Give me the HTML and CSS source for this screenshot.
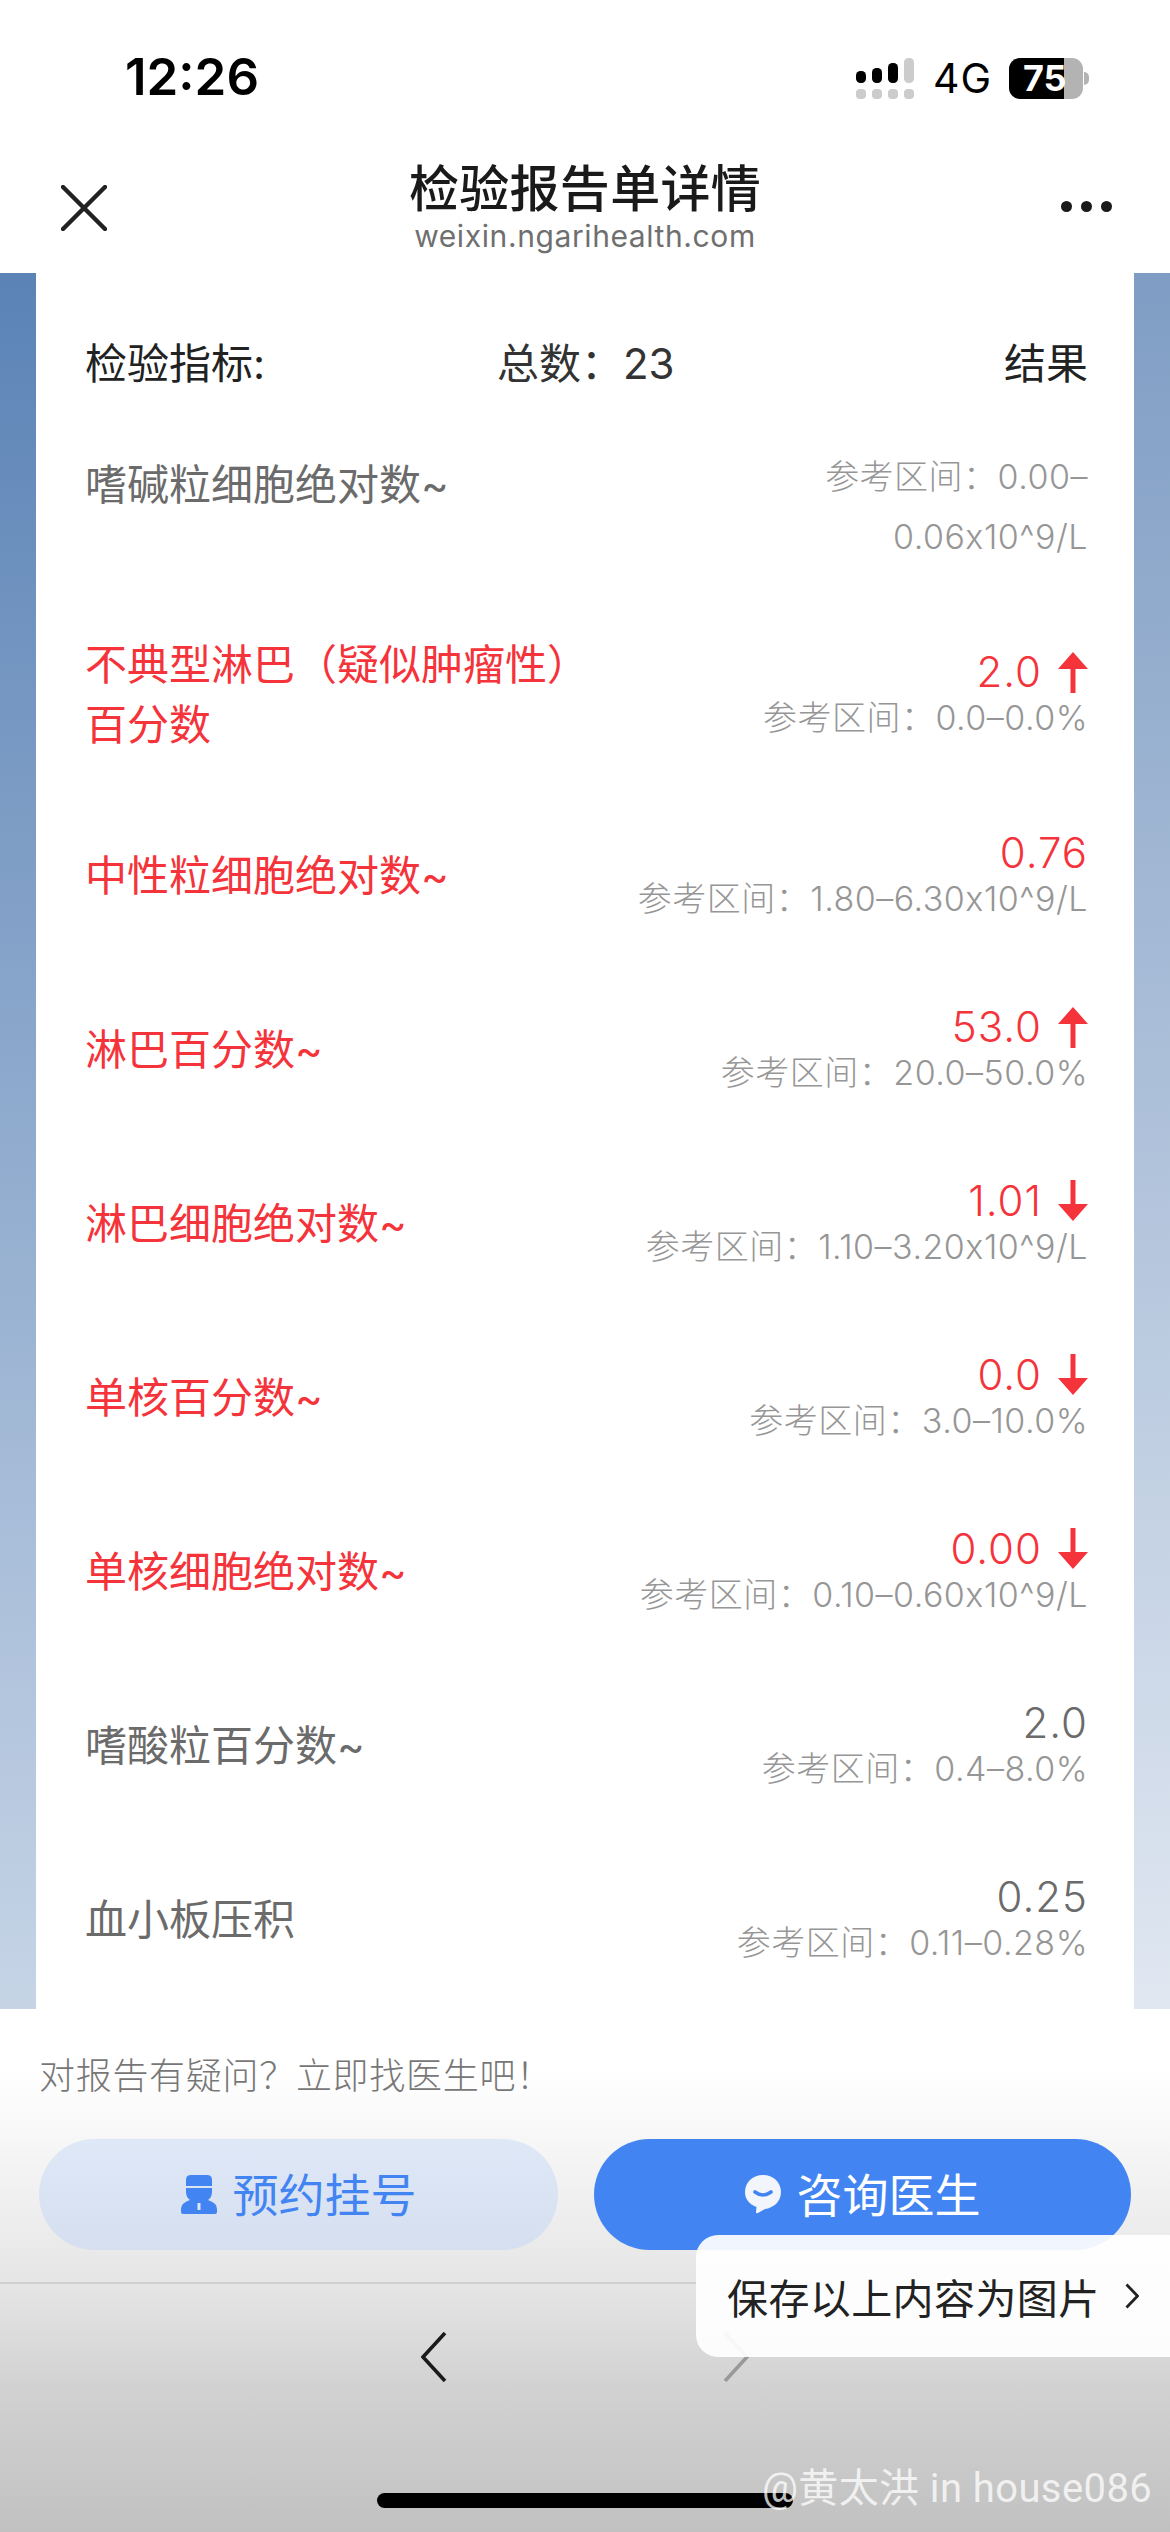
FILE: index.html
```html
<!DOCTYPE html>
<html lang="zh-CN">
<head>
    <meta charset="UTF-8">
    <meta name="viewport" content="width=device-width, initial-scale=1.0">
    <title>检验报告单详情</title>
    <link rel="stylesheet" href="styles.css">
</head>
<body>
    <div class="phone">
        <div class="status-bar">
            <span class="clock">12:26</span>
            <div class="status-icons">
                <svg class="signal" width="58" height="41" viewBox="0 0 58 41">
                    <rect x="0" y="13" width="10" height="12" rx="4.5" fill="#000"/>
                    <rect x="16" y="10" width="10" height="15" rx="4.5" fill="#000"/>
                    <rect x="32" y="5" width="10" height="20" rx="4.5" fill="#000"/>
                    <rect x="48" y="0" width="10" height="25" rx="4.5" fill="#ccc"/>
                    <rect x="0" y="31" width="10" height="10" rx="4" fill="#ccc"/>
                    <rect x="16" y="31" width="10" height="10" rx="4" fill="#ccc"/>
                    <rect x="32" y="31" width="10" height="10" rx="4" fill="#ccc"/>
                    <rect x="48" y="31" width="10" height="10" rx="4" fill="#ccc"/>
                </svg>
                <span class="network">4G</span>
                <div class="battery">
                    <span class="battery-level">75</span>
                    <i class="battery-cap"></i>
                </div>
            </div>
        </div>

        <div class="title-bar">
            <svg class="close-icon" width="46" height="46" viewBox="0 0 46 46">
                <path d="M2 2 L44 44 M44 2 L2 44" stroke="#222" stroke-width="4.4" stroke-linecap="round" fill="none"/>
            </svg>
            <div class="title-text">
                <div class="title">检验报告单详情</div>
                <div class="site">weixin.ngarihealth.com</div>
            </div>
            <div class="more-dots"><i></i><i></i><i></i></div>
        </div>

        <div class="report">
            <div class="card">
                <div class="list-head">
                    <span>检验指标:</span>
                    <span class="total">总数：23</span>
                    <span>结果</span>
                </div>

                <div class="row row-top">
                    <div class="name">嗜碱粒细胞绝对数~</div>
                    <div class="result result-wrap">
                        <div class="range">参考区间：0.00–<br>0.06x10^9/L</div>
                    </div>
                </div>

                <div class="row high">
                    <div class="name">不典型淋巴（疑似肿瘤性）<br>百分数</div>
                    <div class="result">
                        <div class="value">2.0<svg class="arrow" width="30" height="42" viewBox="0 0 30 42"><path d="M15 1 L30 18 H17.5 V42 H12.5 V18 H0 Z" fill="#f5333a"/></svg></div>
                        <div class="range">参考区间：0.0–0.0%</div>
                    </div>
                </div>

                <div class="row high">
                    <div class="name">中性粒细胞绝对数~</div>
                    <div class="result">
                        <div class="value">0.76</div>
                        <div class="range">参考区间：1.80–6.30x10^9/L</div>
                    </div>
                </div>

                <div class="row high">
                    <div class="name">淋巴百分数~</div>
                    <div class="result">
                        <div class="value">53.0<svg class="arrow" width="30" height="42" viewBox="0 0 30 42"><path d="M15 1 L30 18 H17.5 V42 H12.5 V18 H0 Z" fill="#f5333a"/></svg></div>
                        <div class="range">参考区间：20.0–50.0%</div>
                    </div>
                </div>

                <div class="row high">
                    <div class="name">淋巴细胞绝对数~</div>
                    <div class="result">
                        <div class="value">1.01<svg class="arrow" width="30" height="42" viewBox="0 0 30 42"><path d="M15 41 L30 24 H17.5 V0 H12.5 V24 H0 Z" fill="#f5333a"/></svg></div>
                        <div class="range">参考区间：1.10–3.20x10^9/L</div>
                    </div>
                </div>

                <div class="row high">
                    <div class="name">单核百分数~</div>
                    <div class="result">
                        <div class="value">0.0<svg class="arrow" width="30" height="42" viewBox="0 0 30 42"><path d="M15 41 L30 24 H17.5 V0 H12.5 V24 H0 Z" fill="#f5333a"/></svg></div>
                        <div class="range">参考区间：3.0–10.0%</div>
                    </div>
                </div>

                <div class="row high">
                    <div class="name">单核细胞绝对数~</div>
                    <div class="result">
                        <div class="value">0.00<svg class="arrow" width="30" height="42" viewBox="0 0 30 42"><path d="M15 41 L30 24 H17.5 V0 H12.5 V24 H0 Z" fill="#f5333a"/></svg></div>
                        <div class="range">参考区间：0.10–0.60x10^9/L</div>
                    </div>
                </div>

                <div class="row">
                    <div class="name">嗜酸粒百分数~</div>
                    <div class="result">
                        <div class="value">2.0</div>
                        <div class="range">参考区间：0.4–8.0%</div>
                    </div>
                </div>

                <div class="row">
                    <div class="name">血小板压积</div>
                    <div class="result">
                        <div class="value">0.25</div>
                        <div class="range">参考区间：0.11–0.28%</div>
                    </div>
                </div>
            </div>
        </div>

        <div class="footer">
            <div class="ask">对报告有疑问？立即找医生吧！</div>
            <div class="actions">
                <div class="btn btn-book">
                    <svg width="36" height="40" viewBox="0 0 36 40">
                        <path d="M5 5 Q5 0 10 0 H26 Q31 0 31 5 V11 H5 Z" fill="#4285f2"/>
                        <path d="M5 13 H31 V17 Q31 22 27 25 Q36 28 36 34 V37 Q36 39 34 39 H2 Q0 39 0 37 V34 Q0 28 9 25 Q5 22 5 17 Z" fill="#4285f2"/>
                        <rect x="16.5" y="28" width="3" height="7" fill="#dde6f6"/>
                    </svg>
                    <span class="btn-label">预约挂号</span>
                </div>
                <div class="btn btn-consult">
                    <svg width="36" height="40" viewBox="0 0 36 40">
                        <path d="M18 0 C28 0 36 7 36 17 C36 27 28 33 20 34 L13 38 Q11 39 11 37 L11.5 32 C4 29 0 24 0 17 C0 7 8 0 18 0 Z" fill="#f2f5fb"/>
                        <path d="M10 17 Q18 23 26 17" stroke="#4285f2" stroke-width="3.6" fill="none" stroke-linecap="round"/>
                    </svg>
                    <span class="btn-label">咨询医生</span>
                </div>
            </div>
            <div class="toolbar">
                <svg width="26" height="50" viewBox="0 0 26 50"><path d="M24 1 L2 25 L24 49" stroke="#1a1a1a" stroke-width="3.6" fill="none"/></svg>
                <svg width="26" height="50" viewBox="0 0 26 50"><path d="M2 1 L24 25 L2 49" stroke="#999" stroke-width="3.6" fill="none"/></svg>
            </div>
            <div class="home-bar"></div>
        </div>

        <div class="save-popup">保存以上内容为图片
            <svg width="14" height="26" viewBox="0 0 14 26"><path d="M1.5 1.5 L12.5 13 L1.5 24.5" stroke="#222" stroke-width="2.8" fill="none"/></svg>
        </div>
        <div class="watermark">@黄太洪 in house086</div>
    </div>
</body>
</html>
```

FILE: styles.css
```css
* {
    box-sizing: border-box;
}
html, body {
    margin: 0;
    padding: 0;
}
body {
    font-family: Inter, "Noto Sans CJK SC", sans-serif;
    background-color: #ffffff;
}
.phone {
    position: relative;
    width: 1170px;
    height: 2532px;
    overflow: hidden;
    display: flex;
    flex-direction: column;
}

/* status bar */
.status-bar {
    height: 130px;
    padding: 48px 0 0 125px;
    display: flex;
    justify-content: space-between;
    align-items: flex-start;
}
.clock {
    font-size: 51px;
    line-height: 58px;
    font-weight: 600;
    color: #000000;
}
.status-icons {
    display: flex;
    align-items: center;
    padding: 9px 0 0 0;
    margin-right: 87px;
}
.signal {
    margin-right: 19px;
}
.network {
    font-size: 41px;
    line-height: 42px;
    letter-spacing: 1px;
    color: #000000;
    margin-right: 17px;
}
.battery {
    position: relative;
    width: 74px;
    height: 41px;
    border-radius: 11px;
    background: linear-gradient(90deg, #000000 0, #000000 75%, #b3b3b3 75%, #b3b3b3 100%);
}
.battery-level {
    display: block;
    padding-left: 14px;
    font-size: 36px;
    line-height: 41px;
    font-weight: 700;
    color: #ffffff;
}
.battery-cap {
    position: absolute;
    right: -6px;
    top: 14px;
    width: 5px;
    height: 13px;
    border-radius: 0 6px 6px 0;
    background-color: #b3b3b3;
}

/* title */
.title-bar {
    position: relative;
    height: 143px;
    background-color: #ffffff;
}
.close-icon {
    position: absolute;
    left: 61px;
    top: 55px;
}
.title-text {
    padding-top: 29px;
    text-align: center;
}
.title {
    font-size: 50px;
    line-height: 60px;
    letter-spacing: 0.3px;
    font-weight: 500;
    color: #1a1a1a;
}
.site {
    font-size: 30px;
    line-height: 34px;
    color: #6f6f6f;
    letter-spacing: 0.6px;
}
.more-dots {
    position: absolute;
    right: 58px;
    top: 71px;
    display: flex;
    gap: 9px;
}
.more-dots i {
    width: 11px;
    height: 11px;
    border-radius: 50%;
    background-color: #1a1a1a;
}

/* report */
.report {
    height: 1736px;
    padding: 0 36px;
    background:
        linear-gradient(180deg, #5b83b6 0, #c6d4e6 100%) left / 50% 100% no-repeat,
        linear-gradient(180deg, #7f9dc4 0, #e0e7f1 100%) right / 50% 100% no-repeat;
}
.card {
    height: 100%;
    padding: 62px 46px 0 49px;
    background-color: #ffffff;
}
.list-head {
    display: grid;
    grid-template-columns: 412px 1fr auto;
    font-size: 42px;
    line-height: 58px;
    color: #222222;
    margin-bottom: 54px;
}
.total {
    color: #333333;
}
.row {
    display: flex;
    justify-content: space-between;
    align-items: center;
    min-height: 106px;
    margin-bottom: 68px;
    color: #6b6b6b;
}
.row-top {
    align-items: flex-start;
}
.row-top .name {
    padding-top: 8px;
}
.name {
    font-size: 42px;
    line-height: 60px;
    white-space: nowrap;
}
.result {
    text-align: right;
}
.value {
    display: flex;
    justify-content: flex-end;
    align-items: center;
    gap: 16px;
    font-size: 42px;
    line-height: 46px;
    letter-spacing: 1px;
    font-weight: 300;
}
.range {
    font-size: 34px;
    line-height: 46px;
    letter-spacing: 0.5px;
    font-weight: 300;
    color: #969696;
    white-space: nowrap;
}
.result-wrap .range {
    line-height: 60px;
}
.high {
    color: #f5333a;
}

/* footer */
.footer {
    flex: 1;
    position: relative;
    background: linear-gradient(180deg, #ffffff 0, #ffffff 60px, #e6e6e6 272px, #d2d2d2 376px, #c1c1c1 100%);
}
.ask {
    padding: 45px 0 0 39px;
    font-size: 36px;
    line-height: 44px;
    letter-spacing: 0.7px;
    font-weight: 300;
    color: #777777;
}
.actions {
    display: flex;
    gap: 36px;
    margin: 41px 39px 0 39px;
}
.btn {
    height: 111px;
    border-radius: 56px;
    display: flex;
    justify-content: center;
    align-items: center;
    gap: 16px;
    font-size: 46px;
}
.btn-label {
    margin-top: -6px;
}
.btn-book {
    width: 519px;
    background: linear-gradient(180deg, #dfe8f7 0, #d5dfef 100%);
    color: #4285f2;
}
.btn-consult {
    flex: 1;
    background: #4285f2;
    color: #ffffff;
}
.toolbar {
    display: flex;
    justify-content: center;
    gap: 276px;
    margin-top: 32px;
    padding-top: 48px;
    border-top: 2px solid #d0d0d0;
}
.home-bar {
    position: absolute;
    left: 377px;
    top: 484px;
    width: 416px;
    height: 15px;
    border-radius: 8px;
    background-color: #000000;
}

/* overlays */
.save-popup {
    position: absolute;
    left: 696px;
    top: 2235px;
    width: 474px;
    height: 122px;
    padding: 0 0 0 31px;
    border-radius: 22px 0 0 22px;
    background-color: rgba(255, 255, 255, 0.92);
    display: flex;
    align-items: center;
    gap: 25px;
    font-size: 41px;
    letter-spacing: 0.4px;
    color: #222222;
}
.watermark {
    position: absolute;
    left: 762px;
    top: 2462px;
    font-family: Roboto, "Noto Sans CJK SC", sans-serif;
    font-size: 40px;
    line-height: 54px;
    letter-spacing: 0.4px;
    color: rgba(255, 255, 255, 0.75);
    white-space: nowrap;
}
```
